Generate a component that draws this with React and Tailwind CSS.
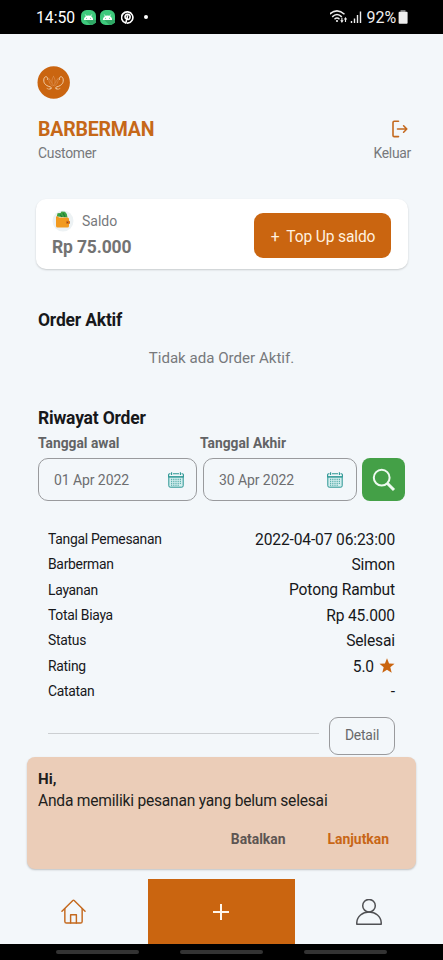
import React from "react";

const rows = [
  ["Tangal Pemesanan", "2022-04-07 06:23:00"],
  ["Barberman", "Simon"],
  ["Layanan", "Potong Rambut"],
  ["Total Biaya", "Rp 45.000"],
  ["Status", "Selesai"],
  ["Rating", "5.0"],
  ["Catatan", "-"],
];

function AndroidBadge() {
  return (
    <svg viewBox="0 0 16 16" className="h-[15px] w-[15px]">
      <rect width="16" height="16" rx="6" fill="#3ec97c" />
      <path d="M5 8.5 L12 8.5 L16 12 V13 Q14 16 10 16 L3 9Z" fill="#30a866" />
      <path d="M3 10.6 A5 4.8 0 0 1 13 10.6Z" fill="#fff" />
      <path d="M4.6 4.8 L6 7 M11.4 4.8 L10 7" stroke="#fff" strokeWidth=".8" />
      <circle cx="5.9" cy="8.8" r=".6" fill="#3ec97c" />
      <circle cx="10.1" cy="8.8" r=".6" fill="#3ec97c" />
    </svg>
  );
}

function PinterestIcon() {
  return (
    <svg viewBox="0 0 24 24" className="ml-[2px] h-[13px] w-[13px]" fill="none" stroke="#fff" strokeWidth="3" strokeLinecap="round">
      <path d="M8.6 22 A10.4 10.4 0 1 1 12 22.4" />
      <path d="M9 21.500 L12 9.500" />
      <path d="M8.200 13.800 C5.800 9.200 9 6.300 12.300 6.300 C16.200 6.300 17.600 9.500 16.500 12.700 C15.500 15.700 12.800 16.400 11.200 14.600" />
    </svg>
  );
}

function StatusIcons() {
  return (
    <svg viewBox="0 0 32 16" className="mr-px h-4 w-8" fill="none" stroke="#eee">
      <path d="M-.5 5.200 Q7 -1.500 14.500 5.200" strokeWidth="1.500" />
      <path d="M2.200 7.900 Q7 3.200 11.800 7.900" strokeWidth="1.500" />
      <path d="M4.500 10.200 Q7 7.800 9.500 10.200" strokeWidth="1.400" />
      <circle cx="7" cy="12" r="1.100" fill="#eee" stroke="none" />
      <path d="M11.900 8.800 V12 M15.500 13 V9.500" strokeWidth="1.100" />
      <path d="M10.200 11.300 H13.600 L11.900 13.900Z M13.800 10.500 H17.200 L15.500 8Z" fill="#eee" stroke="none" />
      <path d="M21.500 14 V12 M24.500 14 V9.500 M27.500 14 V6 M30.500 14 V2.500" strokeWidth="1.400" />
    </svg>
  );
}

function Logo() {
  return (
    <svg viewBox="0 0 33 33" className="h-[33px] w-[33px]" fill="none" strokeLinecap="round">
      <circle cx="16.700" cy="16.500" r="16.200" fill="#ca6510" />
      <g stroke="#f4d6b4" strokeWidth=".9">
        <path d="M10.500 13.500 C11.500 10.500 8 9.500 7 12.500 C6 16.500 8 19.500 13 20.800 C15 21.300 14.500 23.200 13 22.700" />
        <path d="M22.500 13.500 C21.500 10.500 25 9.500 26 12.500 C27 16.500 25 19.500 20 20.800 C18 21.300 18.500 23.200 20 22.700" />
        <path d="M10 22.600 Q12 24.500 14.500 22.500 M23 22.600 Q21 24.500 18.500 22.500" strokeWidth=".6" />
      </g>
      <g stroke="#de955a" strokeWidth=".6">
        <path d="M16.500 10.500 C14 14 14.800 17 16.500 20 C18.200 17 19 14 16.500 10.500Z" />
        <path d="M11.800 12.500 C11.500 16.500 13 18.500 15.500 20 M21.200 12.500 C21.500 16.500 20 18.500 17.500 20 M11.800 12.500 Q14 14 14.500 17 M21.200 12.500 Q19 14 18.500 17" />
      </g>
    </svg>
  );
}

function LogoutIcon() {
  return (
    <svg viewBox="0 0 16 18" className="h-[18px] w-4" fill="none" stroke="#c4691e" strokeWidth="1.600" strokeLinecap="round" strokeLinejoin="round">
      <path d="M6.500 1.200 H2.200 Q1 1.200 1 2.400 V15.400 Q1 16.600 2.200 16.600 H6.500" />
      <path d="M5.500 9 H14.800 M11.600 5.800 L14.800 9 L11.600 12.200" />
    </svg>
  );
}

function WalletIcon() {
  return (
    <svg viewBox="0 0 22 22" className="h-[22px] w-[22px]">
      <circle cx="11" cy="11" r="10.500" fill="#edf2f4" />
      <path d="M4.800 6.500 L5.500 3.200 L8.500 3 L9.500 1.500 L13 1.700 L14.800 4 L15.500 7.500Z" fill="#3fa345" />
      <path d="M8 4.500 L10 7 M11 3 L13 7" stroke="#227c38" strokeWidth="1.200" />
      <path d="M4 7 Q4 6 5.500 6.300 L7 7.500 H15.500 Q17 7.500 17 9 V16 Q17 17.500 15.500 17.500 H5.500 Q4 17.500 4 16Z" fill="#f29a1f" />
      <rect x="14" y="10.800" width="4" height="3.200" rx="1" fill="#d97516" />
      <circle cx="15.500" cy="12.400" r=".7" fill="#8d4d22" />
    </svg>
  );
}

function CalendarIcon() {
  return (
    <svg viewBox="0 0 16 16" className="h-4 w-4" fill="none" stroke="#2b9693">
      <path d="M.8 5 V13.800 Q.8 15.200 2.200 15.200 H13.800 Q15.200 15.200 15.200 13.800 V5Z" fill="#d3eeee" />
      <path d="M2.500 1.700 H1.600 Q.6 1.700 .6 2.700 V4.800 H15.400 V2.700 Q15.400 1.700 14.400 1.700 H13.500 M5 1.700 H11" strokeWidth="1.100" />
      <path d="M3.600 .2 V3 M12.400 .2 V3" strokeWidth="1.100" />
      <path d="M3 7.300 H13 M3 9.300 H13 M3 11.300 H13 M3 13.200 H11" strokeWidth=".9" strokeDasharray="1.200 1" />
    </svg>
  );
}

function DateField({ value, className }) {
  return (
    <div className={"flex h-[43px] items-center justify-between rounded-[10px] border border-[#999a9d] pl-[15px] " + className}>
      <span className="text-[14px] tracking-[-0.08px] text-[#6d6e70]">{value}</span>
      <CalendarIcon />
    </div>
  );
}

export default function App() {
  return (
    <div className="flex h-[960px] w-[443px] flex-col overflow-hidden bg-[#f3f7fa] font-['Roboto',sans-serif] leading-none text-[#17181a]">
      <header className="flex h-[34px] shrink-0 items-center bg-black pl-[36px] pr-[35px] text-white">
        <span className="w-[45px] pt-px text-[15.7px]">14:50</span>
        <div className="flex items-center gap-[4px]">
          <AndroidBadge />
          <AndroidBadge />
          <PinterestIcon />
        </div>
        <span className="ml-[10px] h-1 w-1 rounded-full bg-white" />
        <div className="ml-auto flex items-center">
          <StatusIcons />
          <span className="ml-[4px] pt-px text-[16px] tracking-[-0.1px] text-[#eee]">92%</span>
          <svg viewBox="0 0 10 14" className="ml-[2px] h-[14px] w-[10px]">
            <rect x="2.500" width="5" height="2" fill="#777" />
            <rect x=".6" y="1.800" width="9" height="12" rx="1" fill="#eee" />
          </svg>
        </div>
      </header>

      <main className="h-[723px] shrink-0 overflow-hidden">
        <div className="pl-[37px] pt-[32px]"><Logo /></div>
        <div className="mt-[18px] flex h-6 items-center justify-between pl-[38px] pr-[35px]">
          <h1 className="pt-[2px] text-[19.5px] font-bold tracking-[-0.2px] text-[#c66818]">BARBERMAN</h1>
          <LogoutIcon />
        </div>
        <div className="flex h-[25px] items-center justify-between pl-[38px] pr-8 text-[13.9px] tracking-[-0.28px] text-[#77797c]">
          <span>Customer</span>
          <span>Keluar</span>
        </div>

        <section className="ml-[36px] mt-[33px] flex h-[70px] w-[372px] items-center justify-between rounded-[10px] bg-white pl-4 pr-[17px] shadow-[0_1px_2px_rgba(0,0,0,0.18)]">
          <div className="pt-[2px]">
            <div className="flex h-[24px] items-center gap-[8px]">
              <WalletIcon />
              <span className="text-[14px] text-[#77797c]">Saldo</span>
            </div>
            <div className="flex h-[28px] items-center pt-px text-[17.5px] font-bold tracking-[-0.15px] text-[#737373]">Rp 75.000</div>
          </div>
          <button className="mt-[3px] flex h-[45px] w-[137px] items-center justify-center gap-[7px] rounded-[9px] bg-[#ca6510] pl-px pt-[4px] text-[15.6px] tracking-[-0.15px] text-[#fff0df]">
            <span>+</span>
            <span>Top Up saldo</span>
          </button>
        </section>

        <h2 className="ml-[38px] mt-[41px] flex h-5 items-center pt-[2px] text-[17.5px] font-bold tracking-[-0.2px]">Order Aktif</h2>
        <p className="mt-[18px] flex h-5 items-center justify-center pt-px text-[15.1px] text-[#77797c]">Tidak ada Order Aktif.</p>
        <h2 className="ml-[38px] mt-[40px] flex h-5 items-center pt-[2px] text-[17.5px] font-bold tracking-[-0.2px]">Riwayat Order</h2>
        <div className="ml-[38px] mt-[6px] flex h-5 items-center text-[13.8px] font-bold text-[#626365]">
          <span className="w-[162px]">Tanggal awal</span>
          <span>Tanggal Akhir</span>
        </div>
        <div className="ml-[38px] mt-[4px] flex">
          <DateField value="01 Apr 2022" className="w-[159px] pr-[12px]" />
          <DateField value="30 Apr 2022" className="ml-[6px] w-[154px] pr-[13px]" />
          <button className="ml-[5px] flex h-[43px] w-[43px] items-center justify-center rounded-[8px] bg-[#44a047] pl-px">
            <svg viewBox="0 0 24 24" className="h-6 w-6" fill="none" stroke="#eefaf0">
              <circle cx="9.700" cy="9.700" r="7.900" strokeWidth="2" />
              <path d="M15.500 15.500 L22 22" strokeWidth="3" />
            </svg>
          </button>
        </div>

        <dl className="ml-[48px] mt-[26px] w-[347px]">
          {rows.map(([label, value]) => (
            <div key={label} className="flex h-[25.4px] items-center justify-between">
              <dt className="text-[13.9px] tracking-[-0.28px]">{label}</dt>
              <dd className="flex items-center gap-[5px] pt-[1.5px] text-[15.6px] tracking-[-0.15px]">
                {value}
                {label === "Rating" && (
                  <svg viewBox="0 0 24 24" className="mb-[3px] h-[15px] w-4" fill="#ca6510">
                    <path d="M12 .5 L15.300 8.600 L24 9.200 L17.300 14.800 L19.500 23.500 L12 18.700 L4.500 23.500 L6.700 14.800 L0 9.200 L8.700 8.600Z" />
                  </svg>
                )}
              </dd>
            </div>
          ))}
        </dl>
        <div className="ml-[48px] mt-[12px] flex w-[347px] items-start justify-between">
          <div className="mt-[16px] h-px w-[271px] bg-[#cccfd2]" />
          <button className="flex h-[38px] w-[66px] items-center justify-center rounded-[9px] border border-[#999a9d] text-[13.9px] tracking-[-0.2px] text-[#68696b]">Detail</button>
        </div>
      </main>

      <section className="ml-[27px] h-[112px] w-[389px] shrink-0 rounded-[8px] bg-[#ebcdb8] px-[11px] pt-[12px] shadow-[0_1px_2px_rgba(0,0,0,0.22)]">
        <div className="flex h-[21px] items-center text-[15.1px] font-bold text-[#211e1c]">Hi,</div>
        <div className="flex h-[22px] items-center pt-[2px] text-[15.6px] tracking-[-0.22px] text-[#211e1c]">Anda memiliki pesanan yang belum selesai</div>
        <div className="mt-[18px] flex h-5 items-center justify-end gap-[42px] pr-4 text-[13.9px] font-bold">
          <span className="text-[#5d5552]">Batalkan</span>
          <span className="text-[#c86616]">Lanjutkan</span>
        </div>
      </section>

      <nav className="mt-[10px] grid h-[65px] shrink-0 grid-cols-3">
        <div className="flex items-center justify-center">
          <svg viewBox="0 0 26 26" className="h-[25px] w-[25px]" fill="none" stroke="#c4691e" strokeWidth="1.500" strokeLinecap="round" strokeLinejoin="round">
            <path d="M1 12.800 L12.300 1.500 Q13 .8 13.700 1.500 L25 12.800" />
            <path d="M4 10 V23.300 Q4 25 5.700 25 H20.300 Q22 25 22 23.300 V10" />
            <path d="M10 25 V16.300 H16 V25" />
          </svg>
        </div>
        <div className="flex items-center justify-center bg-[#ca6510]">
          <svg viewBox="0 0 16 16" className="h-4 w-4" stroke="#fff6ec" strokeWidth="2"><path d="M0 8 H16 M8 0 V16" /></svg>
        </div>
        <div className="flex items-center justify-center">
          <svg viewBox="0 0 26 26" className="h-[26px] w-[26px]" fill="none" stroke="#505154" strokeWidth="1.500" strokeLinejoin="round">
            <circle cx="13" cy="6.700" r="6.300" />
            <path d="M.8 25.200 V23.500 C1 17.500 6.500 13 13 13 C19.500 13 25 17.500 25.200 23.500 V25.200Z" />
          </svg>
        </div>
      </nav>
      <footer className="flex h-4 shrink-0 items-center gap-[41px] bg-black pl-[56px]">
        <span className="h-1 w-[83px] rounded-full bg-[#333]" />
        <span className="h-1 w-[83px] rounded-full bg-[#333]" />
        <span className="h-1 w-[83px] rounded-full bg-[#333]" />
      </footer>
    </div>
  );
}
